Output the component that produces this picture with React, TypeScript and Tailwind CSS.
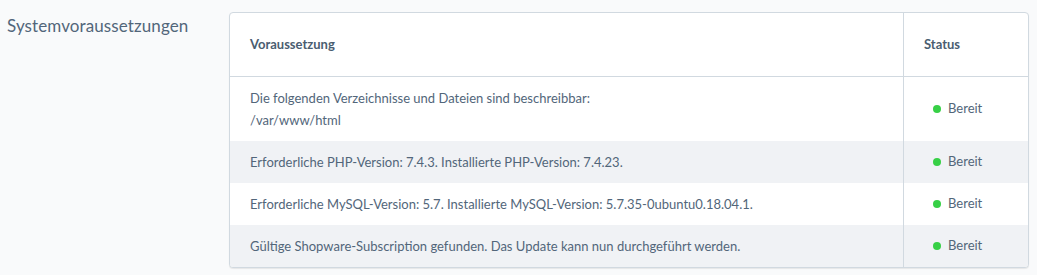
const rows = [
  { text: ['Die folgenden Verzeichnisse und Dateien sind beschreibbar:', '/var/www/html'], tall: true },
  { text: ['Erforderliche PHP-Version: 7.4.3. Installierte PHP-Version: 7.4.23.'] },
  { text: ['Erforderliche MySQL-Version: 5.7. Installierte MySQL-Version: 5.7.35-0ubuntu0.18.04.1.'] },
  { text: ['Gültige Shopware-Subscription gefunden. Das Update kann nun durchgeführt werden.'] },
];

export default function App() {
  return (
    <div className="min-h-[275px] bg-[#f9fafb] font-['Lato',sans-serif] text-[#52667a] flex pt-3">
      <div className="w-[229px] pl-[7px] pt-px text-[17px] tracking-[0.1px]">Systemvoraussetzungen</div>
      <div className="w-[800px] h-[256px] bg-white border border-[#d1d9e0] rounded-[4px] shadow-[0_1px_1px_rgba(0,0,0,0.08)] overflow-hidden">
        <div className="flex h-[64px] border-b border-[#d1d9e0] text-[13px] font-bold text-[#4a5d70]">
          <div className="flex-1 flex items-center pl-5">Voraussetzung</div>
          <div className="w-[125px] border-l border-[#d1d9e0] flex items-center pl-5">Status</div>
        </div>
        {rows.map((r, i) => (
          <div key={i} className={`flex text-[13px] ${r.tall ? 'h-[64px]' : 'h-[42px]'} ${i % 2 === 1 ? 'bg-[#f0f2f5]' : 'bg-white'}`}>
            <div className="flex-1 flex flex-col justify-center pl-5 leading-[22px]">
              {r.text.map((t) => (
                <span key={t}>{t}</span>
              ))}
            </div>
            <div className="w-[125px] border-l border-[#d1d9e0] flex items-center pl-[29px] gap-[7px]">
              <span className="w-2 h-2 rounded-full bg-[#37d046]" />
              <span>Bereit</span>
            </div>
          </div>
        ))}
      </div>
    </div>
  );
}
